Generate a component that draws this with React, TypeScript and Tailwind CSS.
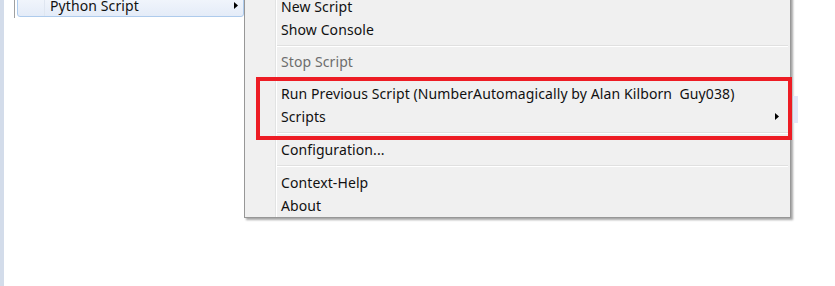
import type { ReactNode } from 'react'

const font = { fontFamily: '"Noto Sans", "Open Sans", Arial, sans-serif' }

function Arrow() {
  return (
    <svg width="4" height="7" viewBox="0 0 4 7" className="block">
      <polygon points="0,0 4,3.5 0,7" fill="#000" />
    </svg>
  )
}

function Item({ children, muted, arrow }: { children: ReactNode; muted?: boolean; arrow?: boolean }) {
  return (
    <div className="flex h-[23px]">
      <div className="w-[31px] shrink-0 border-r border-[#e2e3e3]" />
      <div className="w-px shrink-0 bg-white" />
      <div
        className={`flex flex-1 items-center pl-[4px] pr-[11px] text-[14px] leading-[23px] tracking-[0.1px] whitespace-pre ${muted ? 'text-[#6d6d6d]' : 'text-[#111]'}`}
      >
        <span className="flex-1">{children}</span>
        {arrow && <Arrow />}
      </div>
    </div>
  )
}

function Sep({ h }: { h: string }) {
  return (
    <div className={`flex ${h}`}>
      <div className="w-[31px] shrink-0 border-r border-[#e2e3e3]" />
      <div className="w-px shrink-0 bg-white" />
      <div className="flex flex-1 flex-col justify-center pr-[2px]">
        <div className="h-px bg-[#e0e0e0]" />
        <div className="h-px bg-white" />
      </div>
    </div>
  )
}

export default function App() {
  return (
    <div className="relative flex h-[286px] w-[835px] overflow-hidden bg-white" style={font}>
      <div className="w-[4px] shrink-0 bg-[#d3dcea]" />
      <div className="w-[10px] shrink-0" />

      {/* parent menu */}
      <div className="-mt-[6px] h-[24px] w-[230px] shrink-0 border-l border-[#a0a0a0] bg-white pl-[2px]">
        <div className="flex h-[23px] rounded-[3px] border border-[#aecbec] bg-gradient-to-b from-[#f4f7fc] to-[#e4ecf8]">
          <div className="w-[27px] shrink-0 border-r border-[#dfe6f0]" />
          <div className="flex flex-1 items-center pl-[5px] pr-[5px] text-[14px] tracking-[0.1px] text-[#111]">
            <span className="flex-1">Python Script</span>
            <Arrow />
          </div>
        </div>
      </div>

      {/* submenu */}
      <div className="-mt-[6px] h-[224px] w-[547px] shrink-0 border border-[#979797] bg-[#f0f0f0] pb-px shadow-[2px_2px_2px_rgba(0,0,0,0.35)]">
        <Item>New Script</Item>
        <Item>Show Console</Item>
        <Sep h="h-[9px]" />
        <Item muted>Stop Script</Item>
        <Sep h="h-[9px]" />
        <Item>Run Previous Script (NumberAutomagically by Alan Kilborn  Guy038)</Item>
        <Item arrow>Scripts</Item>
        <Sep h="h-[10px]" />
        <Item>Configuration...</Item>
        <Sep h="h-[10px]" />
        <Item>Context-Help</Item>
        <Item>About</Item>
      </div>

      {/* sliver of highlight to the right */}
      <div className="absolute left-[793px] top-[96px] h-[27px] w-[5px] bg-[#e4e7f8]" />

      {/* red annotation box */}
      <div className="absolute left-[256px] top-[77px] h-[63px] w-[536px] border-[4px] border-[#ed1c24]" />
    </div>
  )
}
